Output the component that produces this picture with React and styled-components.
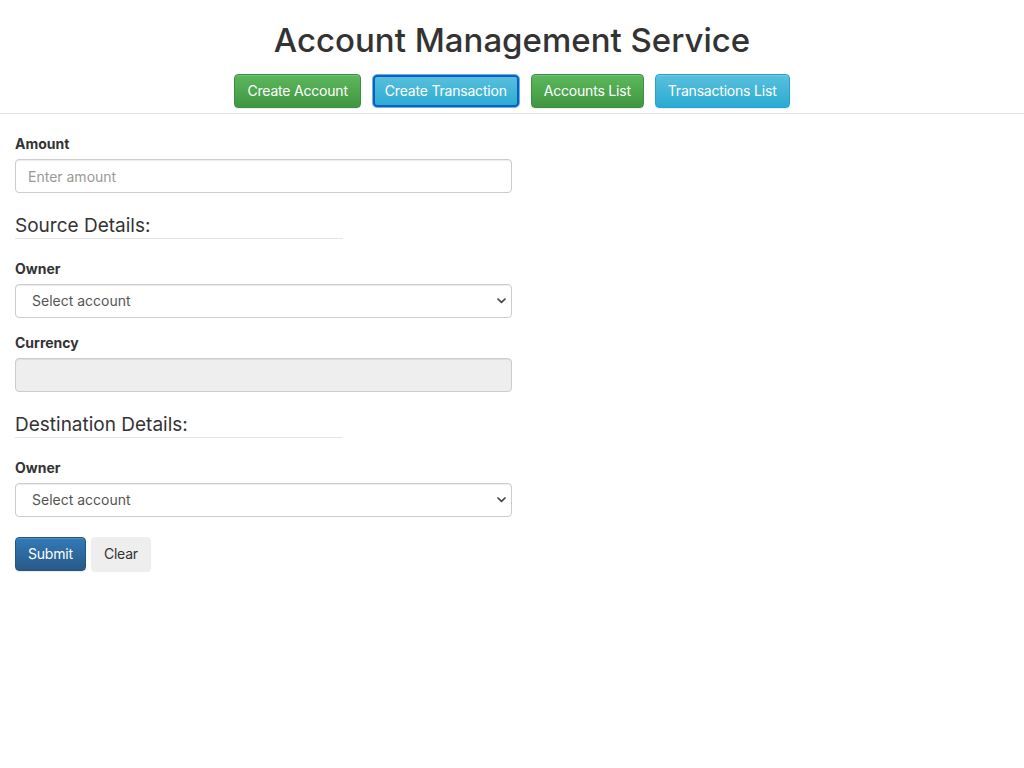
import React from 'react';
import styled, { createGlobalStyle, css } from 'styled-components';

const GlobalStyle = createGlobalStyle`
  * {
    box-sizing: border-box;
  }

  body {
    margin: 0;
    font-family: Inter, "Liberation Sans", sans-serif;
    font-size: 14px;
    line-height: 1.42857;
    color: #333;
    background: #fff;
  }
`;

const variants = {
  success: css`
    background: linear-gradient(to bottom, #5cb85c 0%, #419641 100%);
    border-color: #3e8f3e;
    color: #fff;
  `,
  info: css`
    background: linear-gradient(to bottom, #5bc0de 0%, #2aabd2 100%);
    border-color: #28a4c9;
    color: #fff;
  `,
  primary: css`
    background: linear-gradient(to bottom, #337ab7 0%, #265a88 100%);
    border-color: #245580;
    color: #fff;
  `,
  plain: css`
    background: #eeeeee;
    border-color: #eeeeee;
    color: #333;
  `
};

const App = () => {
  const navButtons = [
    { id: 1, label: 'Create Account', variant: 'success' },
    { id: 2, label: 'Create Transaction', variant: 'info', active: true },
    { id: 3, label: 'Accounts List', variant: 'success' },
    { id: 4, label: 'Transactions List', variant: 'info' }
  ];

  return (
    <>
      <GlobalStyle />
      <Header>
        <Title>Account Management Service</Title>
        <Nav>
          {navButtons.map(button => (
            <Button key={button.id} type="button" $variant={button.variant} $focused={button.active}>
              {button.label}
            </Button>
          ))}
        </Nav>
      </Header>

      <Form onSubmit={e => e.preventDefault()}>
        <FormGroup>
          <Label htmlFor="amount">Amount</Label>
          <Input id="amount" type="text" placeholder="Enter amount" />
        </FormGroup>

        <SectionHeading>Source Details:</SectionHeading>
        <FormGroup>
          <Label htmlFor="source-owner">Owner</Label>
          <SelectWrap>
            <Select id="source-owner" defaultValue="">
              <option value="">Select account</option>
            </Select>
            <Chevron />
          </SelectWrap>
        </FormGroup>
        <FormGroup>
          <Label htmlFor="currency">Currency</Label>
          <Input id="currency" type="text" disabled />
        </FormGroup>

        <SectionHeading>Destination Details:</SectionHeading>
        <FormGroup>
          <Label htmlFor="dest-owner">Owner</Label>
          <SelectWrap>
            <Select id="dest-owner" defaultValue="">
              <option value="">Select account</option>
            </Select>
            <Chevron />
          </SelectWrap>
        </FormGroup>

        <Actions>
          <Button type="submit" $variant="primary">Submit</Button>
          <Button type="button" $variant="plain">Clear</Button>
        </Actions>
      </Form>
    </>
  );
};

const Chevron = () => (
  <ChevronIcon viewBox="0 0 9 6" width="9" height="6">
    <path d="M1 1 L4.5 4.4 L8 1" fill="none" stroke="#444" strokeWidth="1.7" strokeLinecap="round" strokeLinejoin="round" />
  </ChevronIcon>
);

const Header = styled.header`
  text-align: center;
  padding: 20px 0 5px;
  border-bottom: 1px solid #e5e5e5;
`;

const Title = styled.h1`
  margin: 0 0 14px;
  font-size: 33px;
  font-weight: 500;
  line-height: 40px;
  color: #333;
`;

const Nav = styled.nav`
  display: flex;
  justify-content: center;
  gap: 11px;
`;

const Button = styled.button`
  height: 34px;
  padding: 6px 12px;
  font-family: inherit;
  font-size: 14px;
  letter-spacing: -0.2px;
  line-height: 20px;
  border: 1px solid transparent;
  border-radius: 4px;
  box-shadow: inset 0 1px 0 rgba(255, 255, 255, 0.15), 0 1px 1px rgba(0, 0, 0, 0.075);
  cursor: pointer;
  ${({ $variant }) => variants[$variant]}
  ${({ $focused }) =>
    $focused &&
    css`
      border-color: #6fb0e4;
      border-radius: 5px;
      box-shadow: inset 0 0 0 2px #0b5ec2;
    `}
`;

const Form = styled.form`
  width: 527px;
  padding: 20px 15px;
`;

const FormGroup = styled.div`
  margin-bottom: 15px;
`;

const Label = styled.label`
  display: block;
  margin-bottom: 5px;
  font-weight: 700;
  line-height: 20px;
`;

const fieldStyles = css`
  display: block;
  width: 100%;
  height: 34px;
  padding: 6px 12px;
  font-family: inherit;
  font-size: 14px;
  line-height: 20px;
  color: #555;
  background: #fff;
  border: 1px solid #ccc;
  border-radius: 4px;
  box-shadow: inset 0 1px 1px rgba(0, 0, 0, 0.075);
`;

const Input = styled.input`
  ${fieldStyles}

  &::placeholder {
    color: #999;
  }

  &:disabled {
    background: #eeeeee;
    cursor: not-allowed;
  }
`;

const SelectWrap = styled.div`
  position: relative;
`;

const Select = styled.select`
  ${fieldStyles}
  appearance: none;
  padding-left: 16px;
  color: #555;
`;

const ChevronIcon = styled.svg`
  position: absolute;
  right: 6px;
  top: 14px;
  pointer-events: none;
`;

const SectionHeading = styled.h4`
  width: 66%;
  margin: 0 0 20px;
  padding: 7px 0 2px;
  font-size: 19px;
  font-weight: 400;
  line-height: 21px;
  color: #333;
  border-bottom: 1px solid #e5e5e5;
`;

const Actions = styled.div`
  display: flex;
  gap: 5px;
  margin-top: 20px;
`;

export default App;
